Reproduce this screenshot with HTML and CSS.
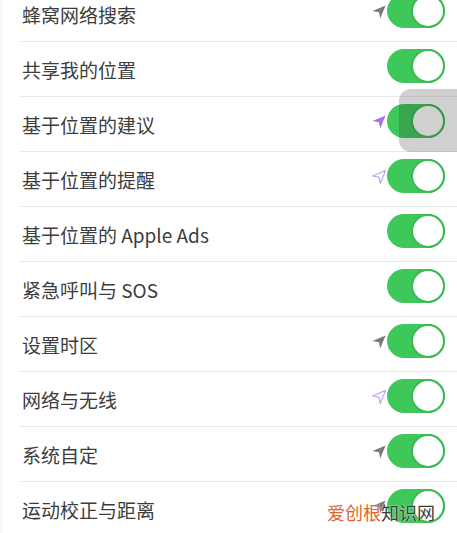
FILE: index.html
```html
<!DOCTYPE html>
<html>
<head lang="zh">
<meta charset="UTF-8">
<title>定位服务</title>
<link rel="stylesheet" href="styles.css">
</head>
<body>
<div class="screen">
    <ul class="list">
        <li class="row">
            <span class="label">蜂窝网络搜索</span>
            <svg class="arrow gray" viewBox="0 0 14 14"><path d="M13.6 0.4 L0.4 6 L7 7.2 L8.2 13.6 Z"/></svg>
            <span class="toggle"><span class="knob"></span></span>
        </li>
        <li class="row">
            <span class="label">共享我的位置</span>
            <span class="toggle"><span class="knob"></span></span>
        </li>
        <li class="row">
            <span class="label">基于位置的建议</span>
            <svg class="arrow purple" viewBox="0 0 14 14"><path d="M13.6 0.4 L0.4 6 L7 7.2 L8.2 13.6 Z"/></svg>
            <span class="toggle"><span class="knob"></span></span>
        </li>
        <li class="row">
            <span class="label">基于位置的提醒</span>
            <svg class="arrow hollow" viewBox="0 0 14 14"><path d="M13.6 0.4 L0.4 6 L7 7.2 L8.2 13.6 Z"/></svg>
            <span class="toggle"><span class="knob"></span></span>
        </li>
        <li class="row">
            <span class="label">基于位置的 Apple Ads</span>
            <span class="toggle"><span class="knob"></span></span>
        </li>
        <li class="row">
            <span class="label">紧急呼叫与 SOS</span>
            <span class="toggle"><span class="knob"></span></span>
        </li>
        <li class="row">
            <span class="label">设置时区</span>
            <svg class="arrow gray" viewBox="0 0 14 14"><path d="M13.6 0.4 L0.4 6 L7 7.2 L8.2 13.6 Z"/></svg>
            <span class="toggle"><span class="knob"></span></span>
        </li>
        <li class="row">
            <span class="label">网络与无线</span>
            <svg class="arrow hollow" viewBox="0 0 14 14"><path d="M13.6 0.4 L0.4 6 L7 7.2 L8.2 13.6 Z"/></svg>
            <span class="toggle"><span class="knob"></span></span>
        </li>
        <li class="row">
            <span class="label">系统自定</span>
            <svg class="arrow gray" viewBox="0 0 14 14"><path d="M13.6 0.4 L0.4 6 L7 7.2 L8.2 13.6 Z"/></svg>
            <span class="toggle"><span class="knob"></span></span>
        </li>
        <li class="row">
            <span class="label">运动校正与距离</span>
            <svg class="arrow gray" viewBox="0 0 14 14"><path d="M13.6 0.4 L0.4 6 L7 7.2 L8.2 13.6 Z"/></svg>
            <span class="toggle"><span class="knob"></span></span>
        </li>
    </ul>

    <!-- floating assistive touch button -->
    <div class="assist"></div>

    <div class="watermark"><span class="wm-orange">爱创根</span>知识网</div>
</div>
</body>
</html>
```

FILE: styles.css
```css
html, body {
    margin: 0;
    padding: 0;
    background: #fff;
}
.screen {
    position: relative;
    width: 457px;
    height: 533px;
    overflow: hidden;
    background: #fff;
    border-left: 2px solid #f7f7f7;
    box-sizing: border-box;
    font-family: "Noto Sans CJK SC", "Noto Sans", sans-serif;
}
.list {
    list-style: none;
    margin: -13px 0 0 0;
    padding: 0 0 0 18px;
}
.row {
    display: flex;
    align-items: center;
    height: 54px;
    border-bottom: 1px solid #e9e9e9;
    padding-right: 12px;
}
.label {
    flex: 1;
    padding-left: 2px;
    font-size: 19px;
    line-height: 1;
    color: #3d3d3d;
    margin-top: 1px;
}
.arrow {
    width: 14px;
    height: 14px;
    margin-right: 1px;
    margin-bottom: 5px;
}
.arrow.gray path {
    fill: #7a7a7a;
}
.arrow.purple path {
    fill: #a772e6;
}
.arrow.hollow path {
    fill: none;
    stroke: #c3a3ee;
    stroke-width: 1.2;
    stroke-linejoin: round;
}
.toggle {
    position: relative;
    width: 58px;
    height: 34px;
    border-radius: 17px;
    background: #3fc85a;
    margin-bottom: 6px;
    flex: none;
}
.knob {
    position: absolute;
    top: 0;
    right: 0;
    width: 30px;
    height: 30px;
    border-radius: 50%;
    background: #fff;
    border: 2px solid #3ab954;
}
.assist {
    position: absolute;
    left: 397px;
    top: 89px;
    width: 80px;
    height: 63px;
    border-radius: 12px;
    background: rgba(40, 40, 40, 0.22);
}
.watermark {
    position: absolute;
    left: 325px;
    top: 503px;
    font-size: 18px;
    line-height: 1;
    color: #3a3a3a;
    text-shadow: 0 0 2px #fff;
}
.wm-orange {
    color: #e2652b;
}
```
